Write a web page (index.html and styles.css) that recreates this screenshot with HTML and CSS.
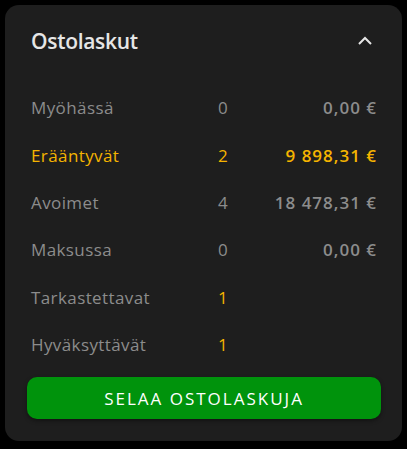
FILE: index.html
```html
<!DOCTYPE html>
<html>
	<head>
		<meta charset="utf-8">
		<link rel="stylesheet" href="styles.css">
	</head>
	<body>
		<div class="kortti">
			<div class="otsikko">
				<h1>Ostolaskut</h1>
				<svg class="nuoli" width="16" height="10" viewBox="0 0 16 10">
					<path d="M2 8 L8 2 L14 8" fill="none" stroke="#e6e6e6" stroke-width="2"/>
				</svg>
			</div>
			<div class="rivit">
				<div class="rivi">
					<span class="nimi">Myöhässä</span>
					<span class="maara">0</span>
					<span class="summa">0,00 €</span>
				</div>
				<div class="rivi korostus">
					<span class="nimi">Erääntyvät</span>
					<span class="maara">2</span>
					<span class="summa">9 898,31 €</span>
				</div>
				<div class="rivi">
					<span class="nimi">Avoimet</span>
					<span class="maara">4</span>
					<span class="summa">18 478,31 €</span>
				</div>
				<div class="rivi">
					<span class="nimi">Maksussa</span>
					<span class="maara">0</span>
					<span class="summa">0,00 €</span>
				</div>
				<div class="rivi">
					<span class="nimi">Tarkastettavat</span>
					<span class="maara oranssi">1</span>
					<span class="summa"></span>
				</div>
				<div class="rivi">
					<span class="nimi">Hyväksyttävät</span>
					<span class="maara oranssi">1</span>
					<span class="summa"></span>
				</div>
			</div>
			<button class="selaa">SELAA OSTOLASKUJA</button>
		</div>
	</body>
</html>
```

FILE: styles.css
```css
body{
	margin: 0;
	background-color: #000;
	font-family: "Open Sans", Lato, sans-serif;
}

.kortti{
	background-color: #1e1e1e;
	border-radius: 14px;
	margin: 5px;
	width: 397px;
	height: 436px;
	box-sizing: border-box;
	padding: 0 21px 0 22px;
}

.otsikko{
	display: flex;
	align-items: center;
	justify-content: space-between;
	height: 72px;
	padding: 0 7px 0 4px;
}

h1{
	margin: 0;
	font-size: 21px;
	font-weight: 600;
	letter-spacing: -0.3px;
	color: #e6e6e6;
}

.nuoli{
	margin-right: 1px;
}

.rivit{
	padding: 7px 0 0 4px;
}

.rivi{
	display: grid;
	grid-template-columns: 182px 20px 1fr;
	align-items: center;
	height: 47.4px;
	font-size: 17px;
	letter-spacing: 0.4px;
	color: #8c8c8c;
	padding-right: 4px;
}

.maara{
	text-align: center;
}

.summa{
	text-align: right;
	font-weight: 600;
	letter-spacing: 1px;
}

.korostus{
	color: #f5b400;
}

.oranssi{
	color: #f5b400;
}

.selaa{
	display: block;
	width: 354px;
	height: 42px;
	margin-top: 9px;
	border: none;
	border-radius: 10px;
	background-color: #00930c;
	color: #fff;
	font-family: inherit;
	font-size: 17px;
	font-weight: 500;
	letter-spacing: 2px;
	box-shadow: 0 2px 4px rgba(0,0,0,0.4);
}
```
